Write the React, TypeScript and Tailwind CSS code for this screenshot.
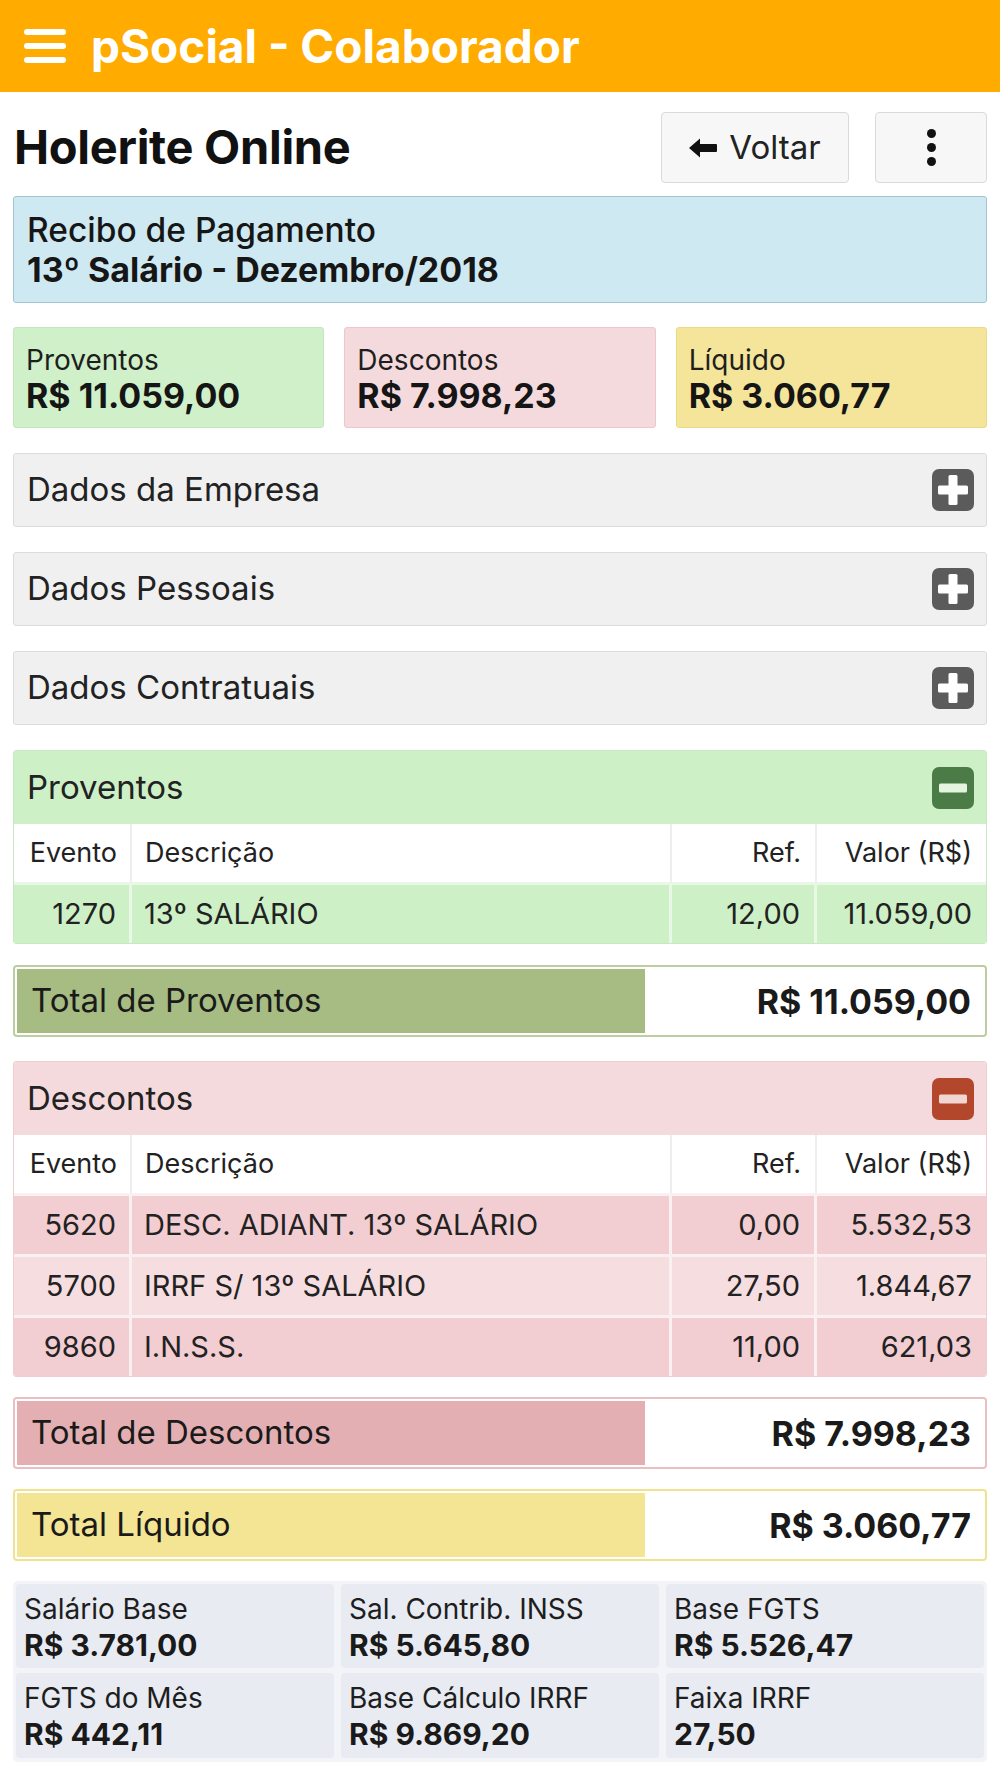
import React from "react";

const font = { fontFamily: "Inter, 'Noto Sans', 'Liberation Sans', sans-serif" };

function PlusIcon() {
  return (
    <svg width="42" height="42" viewBox="0 0 42 42">
      <rect x="0" y="0" width="42" height="42" rx="7" fill="#5b5b5b" />
      <rect x="6" y="16.5" width="30" height="9" rx="1.5" fill="#ffffff" />
      <rect x="16.5" y="6" width="9" height="30" rx="1.5" fill="#ffffff" />
    </svg>
  );
}

function MinusIcon({ color, bar }: { color: string; bar: string }) {
  return (
    <svg width="42" height="42" viewBox="0 0 42 42">
      <rect x="0" y="0" width="42" height="42" rx="7" fill={color} />
      <rect x="7" y="16.5" width="28" height="9" rx="1.5" fill={bar} />
    </svg>
  );
}

function CollapsedPanel({ title }: { title: string }) {
  return (
    <div className="h-[74px] rounded-[3px] border border-[#dcdcdc] bg-[#f0f0f0] flex items-center justify-between pl-[13px] pr-[12px]">
      <span className="text-[33px] text-[#222]">{title}</span>
      <PlusIcon />
    </div>
  );
}

type Row = { ev: string; desc: string; ref: string; val: string };

function EventTable({
  rows,
  rowColors,
  lineColor,
}: {
  rows: Row[];
  rowColors: string[];
  lineColor: string;
}) {
  return (
    <div className="flex flex-col">
      <div className="grid grid-cols-[118px_1fr_145px_169px] h-[58px] bg-white text-[27px] text-[#222]">
        <div className="flex items-center justify-end pr-[13px] border-r-2 border-[#eeeeee]">Evento</div>
        <div className="flex items-center pl-[13px] border-r-2 border-[#eeeeee]">Descrição</div>
        <div className="flex items-center justify-end pr-[14px] border-r-2 border-[#eeeeee]">Ref.</div>
        <div className="flex items-center justify-end pr-[14px]">Valor (R$)</div>
      </div>
      {rows.map((r, i) => (
        <div
          key={r.ev}
          className="grid grid-cols-[118px_1fr_145px_169px] h-[61px] text-[29px] text-[#222] border-t-[3px]"
          style={{ backgroundColor: rowColors[i % rowColors.length], borderColor: lineColor }}
        >
          <div className="flex items-center justify-end pr-[13px] border-r-[3px]" style={{ borderColor: lineColor }}>{r.ev}</div>
          <div className="flex items-center pl-[12px] border-r-[3px]" style={{ borderColor: lineColor }}>{r.desc}</div>
          <div className="flex items-center justify-end pr-[14px] border-r-[3px]" style={{ borderColor: lineColor }}>{r.ref}</div>
          <div className="flex items-center justify-end pr-[14px]">{r.val}</div>
        </div>
      ))}
    </div>
  );
}

function TotalBar({
  label,
  value,
  border,
  fill,
}: {
  label: string;
  value: string;
  border: string;
  fill: string;
}) {
  return (
    <div
      className="h-[72px] rounded-[4px] border-2 bg-white p-[2px] flex"
      style={{ borderColor: border }}
    >
      <div
        className="w-[628px] flex items-center pl-[14px] text-[33px] text-[#1a1a1a]"
        style={{ backgroundColor: fill }}
      >
        {label}
      </div>
      <div className="flex-1 flex items-center justify-end pr-[12px] text-[34px] font-bold text-[#1a1a1a]">
        {value}
      </div>
    </div>
  );
}

function InfoCell({ label, value }: { label: string; value: string }) {
  return (
    <div className="rounded-[4px] bg-[#e8ebf2] flex flex-col justify-center pl-[8px] pt-[2px]">
      <div className="text-[28px] leading-[35px] text-[#1e1e1e]">{label}</div>
      <div className="text-[30px] leading-[36px] font-bold text-[#1a1a1a]">{value}</div>
    </div>
  );
}

export default function App() {
  return (
    <div className="w-[1000px] min-h-[1778px] bg-white" style={font}>
      {/* Header */}
      <div className="h-[92px] bg-[#ffab00] flex items-center pl-[24px]">
        <svg width="42" height="36" viewBox="0 0 42 36" className="mt-[2px]">
          <rect x="0" y="0" width="42" height="6" rx="3" fill="#ffffff" />
          <rect x="0" y="14" width="42" height="6" rx="3" fill="#ffffff" />
          <rect x="0" y="28" width="42" height="6" rx="3" fill="#ffffff" />
        </svg>
        <span className="ml-[25px] text-[46px] font-bold text-white">
          pSocial - Colaborador
        </span>
      </div>

      <div className="px-[13px]">
        {/* Title row */}
        <div className="mt-[20px] h-[71px] flex items-center">
          <h1 className="flex-1 pl-[1px] text-[47px] font-bold text-[#111] tracking-[-0.3px]">
            Holerite Online
          </h1>
          <button className="w-[188px] h-[71px] rounded-[4px] border border-[#dadada] bg-[#f7f7f7] flex items-center justify-center gap-[12px] text-[33px] text-[#222]">
            <svg width="28" height="20" viewBox="0 0 28 20">
              <path d="M0 10 L11 0.5 L11 6 L27 6 Q28 6 28 7 L28 13 Q28 14 27 14 L11 14 L11 19.5 Z" fill="#111" />
            </svg>
            <span>Voltar</span>
          </button>
          <button className="ml-[26px] w-[112px] h-[71px] rounded-[4px] border border-[#dadada] bg-[#f7f7f7] flex flex-col items-center justify-center gap-[5px]">
            <span className="block w-[9px] h-[9px] rounded-full bg-[#111]" />
            <span className="block w-[9px] h-[9px] rounded-full bg-[#111]" />
            <span className="block w-[9px] h-[9px] rounded-full bg-[#111]" />
          </button>
        </div>

        {/* Info box */}
        <div className="mt-[13px] h-[107px] rounded-[3px] border border-[#9fc6d3] bg-[#cfe9f2] flex flex-col justify-center pl-[13px] text-[#161616]">
          <div className="text-[33.5px] leading-[39px] font-medium">Recibo de Pagamento</div>
          <div className="text-[34px] leading-[39px] font-bold">13º Salário - Dezembro/2018</div>
        </div>

        {/* Summary cards */}
        <div className="mt-[24px] grid grid-cols-3 gap-[20px]">
          <div className="h-[101px] rounded-[3px] border border-[#c4e6bd] bg-[#cff0c8] flex flex-col justify-center pl-[12px] pt-[2px]">
            <div className="text-[28px] leading-[34px] text-[#1e1e1e]">Proventos</div>
            <div className="text-[34px] leading-[38px] font-bold text-[#151515]">R$ 11.059,00</div>
          </div>
          <div className="h-[101px] rounded-[3px] border border-[#efc6cb] bg-[#f5dadd] flex flex-col justify-center pl-[12px] pt-[2px]">
            <div className="text-[28px] leading-[34px] text-[#1e1e1e]">Descontos</div>
            <div className="text-[34px] leading-[38px] font-bold text-[#151515]">R$ 7.998,23</div>
          </div>
          <div className="h-[101px] rounded-[3px] border border-[#ead985] bg-[#f4e59a] flex flex-col justify-center pl-[12px] pt-[2px]">
            <div className="text-[28px] leading-[34px] text-[#1e1e1e]">Líquido</div>
            <div className="text-[34px] leading-[38px] font-bold text-[#151515]">R$ 3.060,77</div>
          </div>
        </div>

        {/* Collapsed panels */}
        <div className="mt-[25px] flex flex-col gap-[25px]">
          <CollapsedPanel title="Dados da Empresa" />
          <CollapsedPanel title="Dados Pessoais" />
          <CollapsedPanel title="Dados Contratuais" />
        </div>

        {/* Proventos */}
        <div className="mt-[25px] rounded-[3px] border border-[#c8e8c1] overflow-hidden">
          <div className="h-[73px] bg-[#cdf0c6] flex items-center justify-between pl-[13px] pr-[12px]">
            <span className="text-[33px] text-[#222]">Proventos</span>
            <MinusIcon color="#4b7c48" bar="#e4f4df" />
          </div>
          <EventTable
            rows={[{ ev: "1270", desc: "13º SALÁRIO", ref: "12,00", val: "11.059,00" }]}
            rowColors={["#cdf0c6"]}
            lineColor="#e9f7e6"
          />
        </div>

        {/* Total Proventos */}
        <div className="mt-[21px]">
          <TotalBar label="Total de Proventos" value="R$ 11.059,00" border="#bccda1" fill="#a7bc82" />
        </div>

        {/* Descontos */}
        <div className="mt-[24px] rounded-[3px] border border-[#efcdd1] overflow-hidden">
          <div className="h-[73px] bg-[#f5dadd] flex items-center justify-between pl-[13px] pr-[12px]">
            <span className="text-[33px] text-[#222]">Descontos</span>
            <MinusIcon color="#b3472c" bar="#f1d6d2" />
          </div>
          <EventTable
            rows={[
              { ev: "5620", desc: "DESC. ADIANT. 13º SALÁRIO", ref: "0,00", val: "5.532,53" },
              { ev: "5700", desc: "IRRF S/ 13º SALÁRIO", ref: "27,50", val: "1.844,67" },
              { ev: "9860", desc: "I.N.S.S.", ref: "11,00", val: "621,03" },
            ]}
            rowColors={["#f2cdd1", "#f6dde0"]}
            lineColor="#fbf0f1"
          />
        </div>

        {/* Total Descontos */}
        <div className="mt-[20px]">
          <TotalBar label="Total de Descontos" value="R$ 7.998,23" border="#e9bfc2" fill="#e4afb2" />
        </div>

        {/* Total Liquido */}
        <div className="mt-[20px]">
          <TotalBar label="Total Líquido" value="R$ 3.060,77" border="#f0e38f" fill="#f4e595" />
        </div>

        {/* Info grid */}
        <div className="mt-[20px] rounded-[5px] bg-[#f2f4f7] p-[3px] pb-[4px] grid grid-cols-3 grid-rows-[84px_85px] gap-x-[7px] gap-y-[5px]">
          <InfoCell label="Salário Base" value="R$ 3.781,00" />
          <InfoCell label="Sal. Contrib. INSS" value="R$ 5.645,80" />
          <InfoCell label="Base FGTS" value="R$ 5.526,47" />
          <InfoCell label="FGTS do Mês" value="R$ 442,11" />
          <InfoCell label="Base Cálculo IRRF" value="R$ 9.869,20" />
          <InfoCell label="Faixa IRRF" value="27,50" />
        </div>
      </div>
    </div>
  );
}
